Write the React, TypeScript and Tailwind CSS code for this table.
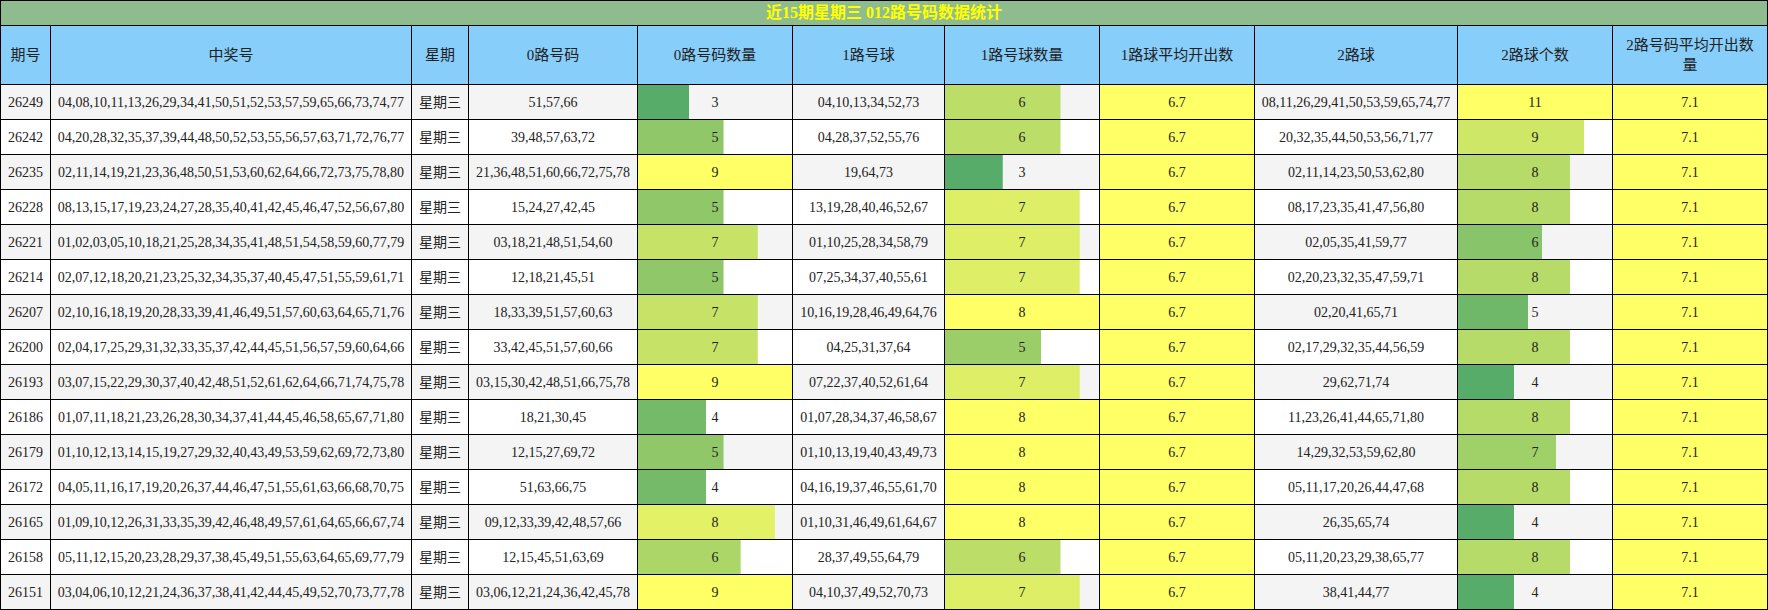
import React from "react";

type Row = {
  id: string;
  nums: string;
  r0: string;
  c0: number;
  r1: string;
  c1: number;
  r2: string;
  c2: number;
};

const rows: Row[] = [
  { id: "26249", nums: "04,08,10,11,13,26,29,34,41,50,51,52,53,57,59,65,66,73,74,77", r0: "51,57,66", c0: 3, r1: "04,10,13,34,52,73", c1: 6, r2: "08,11,26,29,41,50,53,59,65,74,77", c2: 11 },
  { id: "26242", nums: "04,20,28,32,35,37,39,44,48,50,52,53,55,56,57,63,71,72,76,77", r0: "39,48,57,63,72", c0: 5, r1: "04,28,37,52,55,76", c1: 6, r2: "20,32,35,44,50,53,56,71,77", c2: 9 },
  { id: "26235", nums: "02,11,14,19,21,23,36,48,50,51,53,60,62,64,66,72,73,75,78,80", r0: "21,36,48,51,60,66,72,75,78", c0: 9, r1: "19,64,73", c1: 3, r2: "02,11,14,23,50,53,62,80", c2: 8 },
  { id: "26228", nums: "08,13,15,17,19,23,24,27,28,35,40,41,42,45,46,47,52,56,67,80", r0: "15,24,27,42,45", c0: 5, r1: "13,19,28,40,46,52,67", c1: 7, r2: "08,17,23,35,41,47,56,80", c2: 8 },
  { id: "26221", nums: "01,02,03,05,10,18,21,25,28,34,35,41,48,51,54,58,59,60,77,79", r0: "03,18,21,48,51,54,60", c0: 7, r1: "01,10,25,28,34,58,79", c1: 7, r2: "02,05,35,41,59,77", c2: 6 },
  { id: "26214", nums: "02,07,12,18,20,21,23,25,32,34,35,37,40,45,47,51,55,59,61,71", r0: "12,18,21,45,51", c0: 5, r1: "07,25,34,37,40,55,61", c1: 7, r2: "02,20,23,32,35,47,59,71", c2: 8 },
  { id: "26207", nums: "02,10,16,18,19,20,28,33,39,41,46,49,51,57,60,63,64,65,71,76", r0: "18,33,39,51,57,60,63", c0: 7, r1: "10,16,19,28,46,49,64,76", c1: 8, r2: "02,20,41,65,71", c2: 5 },
  { id: "26200", nums: "02,04,17,25,29,31,32,33,35,37,42,44,45,51,56,57,59,60,64,66", r0: "33,42,45,51,57,60,66", c0: 7, r1: "04,25,31,37,64", c1: 5, r2: "02,17,29,32,35,44,56,59", c2: 8 },
  { id: "26193", nums: "03,07,15,22,29,30,37,40,42,48,51,52,61,62,64,66,71,74,75,78", r0: "03,15,30,42,48,51,66,75,78", c0: 9, r1: "07,22,37,40,52,61,64", c1: 7, r2: "29,62,71,74", c2: 4 },
  { id: "26186", nums: "01,07,11,18,21,23,26,28,30,34,37,41,44,45,46,58,65,67,71,80", r0: "18,21,30,45", c0: 4, r1: "01,07,28,34,37,46,58,67", c1: 8, r2: "11,23,26,41,44,65,71,80", c2: 8 },
  { id: "26179", nums: "01,10,12,13,14,15,19,27,29,32,40,43,49,53,59,62,69,72,73,80", r0: "12,15,27,69,72", c0: 5, r1: "01,10,13,19,40,43,49,73", c1: 8, r2: "14,29,32,53,59,62,80", c2: 7 },
  { id: "26172", nums: "04,05,11,16,17,19,20,26,37,44,46,47,51,55,61,63,66,68,70,75", r0: "51,63,66,75", c0: 4, r1: "04,16,19,37,46,55,61,70", c1: 8, r2: "05,11,17,20,26,44,47,68", c2: 8 },
  { id: "26165", nums: "01,09,10,12,26,31,33,35,39,42,46,48,49,57,61,64,65,66,67,74", r0: "09,12,33,39,42,48,57,66", c0: 8, r1: "01,10,31,46,49,61,64,67", c1: 8, r2: "26,35,65,74", c2: 4 },
  { id: "26158", nums: "05,11,12,15,20,23,28,29,37,38,45,49,51,55,63,64,65,69,77,79", r0: "12,15,45,51,63,69", c0: 6, r1: "28,37,49,55,64,79", c1: 6, r2: "05,11,20,23,29,38,65,77", c2: 8 },
  { id: "26151", nums: "03,04,06,10,12,21,24,36,37,38,41,42,44,45,49,52,70,73,77,78", r0: "03,06,12,21,24,36,42,45,78", c0: 9, r1: "04,10,37,49,52,70,73", c1: 7, r2: "38,41,44,77", c2: 4 },
];

const headers = [
  "期号",
  "中奖号",
  "星期",
  "0路号码",
  "0路号码数量",
  "1路号球",
  "1路号球数量",
  "1路球平均开出数",
  "2路球",
  "2路球个数",
  "2路号码平均开出数量",
];

const range = (key: "c0" | "c1" | "c2") => {
  const vals = rows.map((r) => r[key]);
  return [Math.min(...vals), Math.max(...vals)];
};

// green -> yellow scale, like a spreadsheet data bar
const barStyle = (v: number, [min, max]: number[]) => {
  const t = (v - min) / (max - min);
  const r = Math.round(88 + (255 - 88) * t);
  const g = Math.round(172 + (255 - 172) * t);
  const b = Math.round(106 + (102 - 106) * t);
  const c = `rgb(${r},${g},${b})`;
  return {
    backgroundImage: `linear-gradient(${c}, ${c})`,
    backgroundSize: `${(v / max) * 100}% 100%`,
    backgroundRepeat: "no-repeat",
  };
};

const BarCell = ({ v, rng, bg }: { v: number; rng: number[]; bg: string }) => (
  <div className={`flex items-center justify-center ${bg}`} style={barStyle(v, rng)}>
    {v}
  </div>
);

export default function App() {
  const rng0 = range("c0");
  const rng1 = range("c1");
  const rng2 = range("c2");

  return (
    <div className="w-[1768px] h-[610px] bg-white font-['Liberation_Serif','Noto_Sans_CJK_SC',serif] text-[#222]">
      <div className="grid grid-cols-[49px_360px_56px_168px_154px_151px_154px_154px_202px_154px_154px] grid-rows-[24px_58px_repeat(15,34px)] gap-px p-px bg-black">
        <div className="col-span-11 flex items-center justify-center bg-[#8fbc8f] text-[16px] font-bold text-[#ffff00]">
          近15期星期三 012路号码数据统计
        </div>

        {headers.map((h) => (
          <div
            key={h}
            className="flex items-center justify-center bg-[#87cefa] px-2 text-center text-[15px] leading-5"
          >
            {h}
          </div>
        ))}

        {rows.map((r, i) => {
          const bg = i % 2 === 0 ? "bg-[#f4f4f4]" : "bg-white";
          const cell = `flex items-center justify-center text-[14px] ${bg}`;
          return (
            <React.Fragment key={r.id}>
              <div className={cell}>{r.id}</div>
              <div className={cell}>{r.nums}</div>
              <div className={cell}>星期三</div>
              <div className={cell}>{r.r0}</div>
              <BarCell v={r.c0} rng={rng0} bg={`text-[14px] ${bg}`} />
              <div className={cell}>{r.r1}</div>
              <BarCell v={r.c1} rng={rng1} bg={`text-[14px] ${bg}`} />
              <div className="flex items-center justify-center bg-[#ffff66] text-[14px]">6.7</div>
              <div className={cell}>{r.r2}</div>
              <BarCell v={r.c2} rng={rng2} bg={`text-[14px] ${bg}`} />
              <div className="flex items-center justify-center bg-[#ffff66] text-[14px]">7.1</div>
            </React.Fragment>
          );
        })}
      </div>
    </div>
  );
}
